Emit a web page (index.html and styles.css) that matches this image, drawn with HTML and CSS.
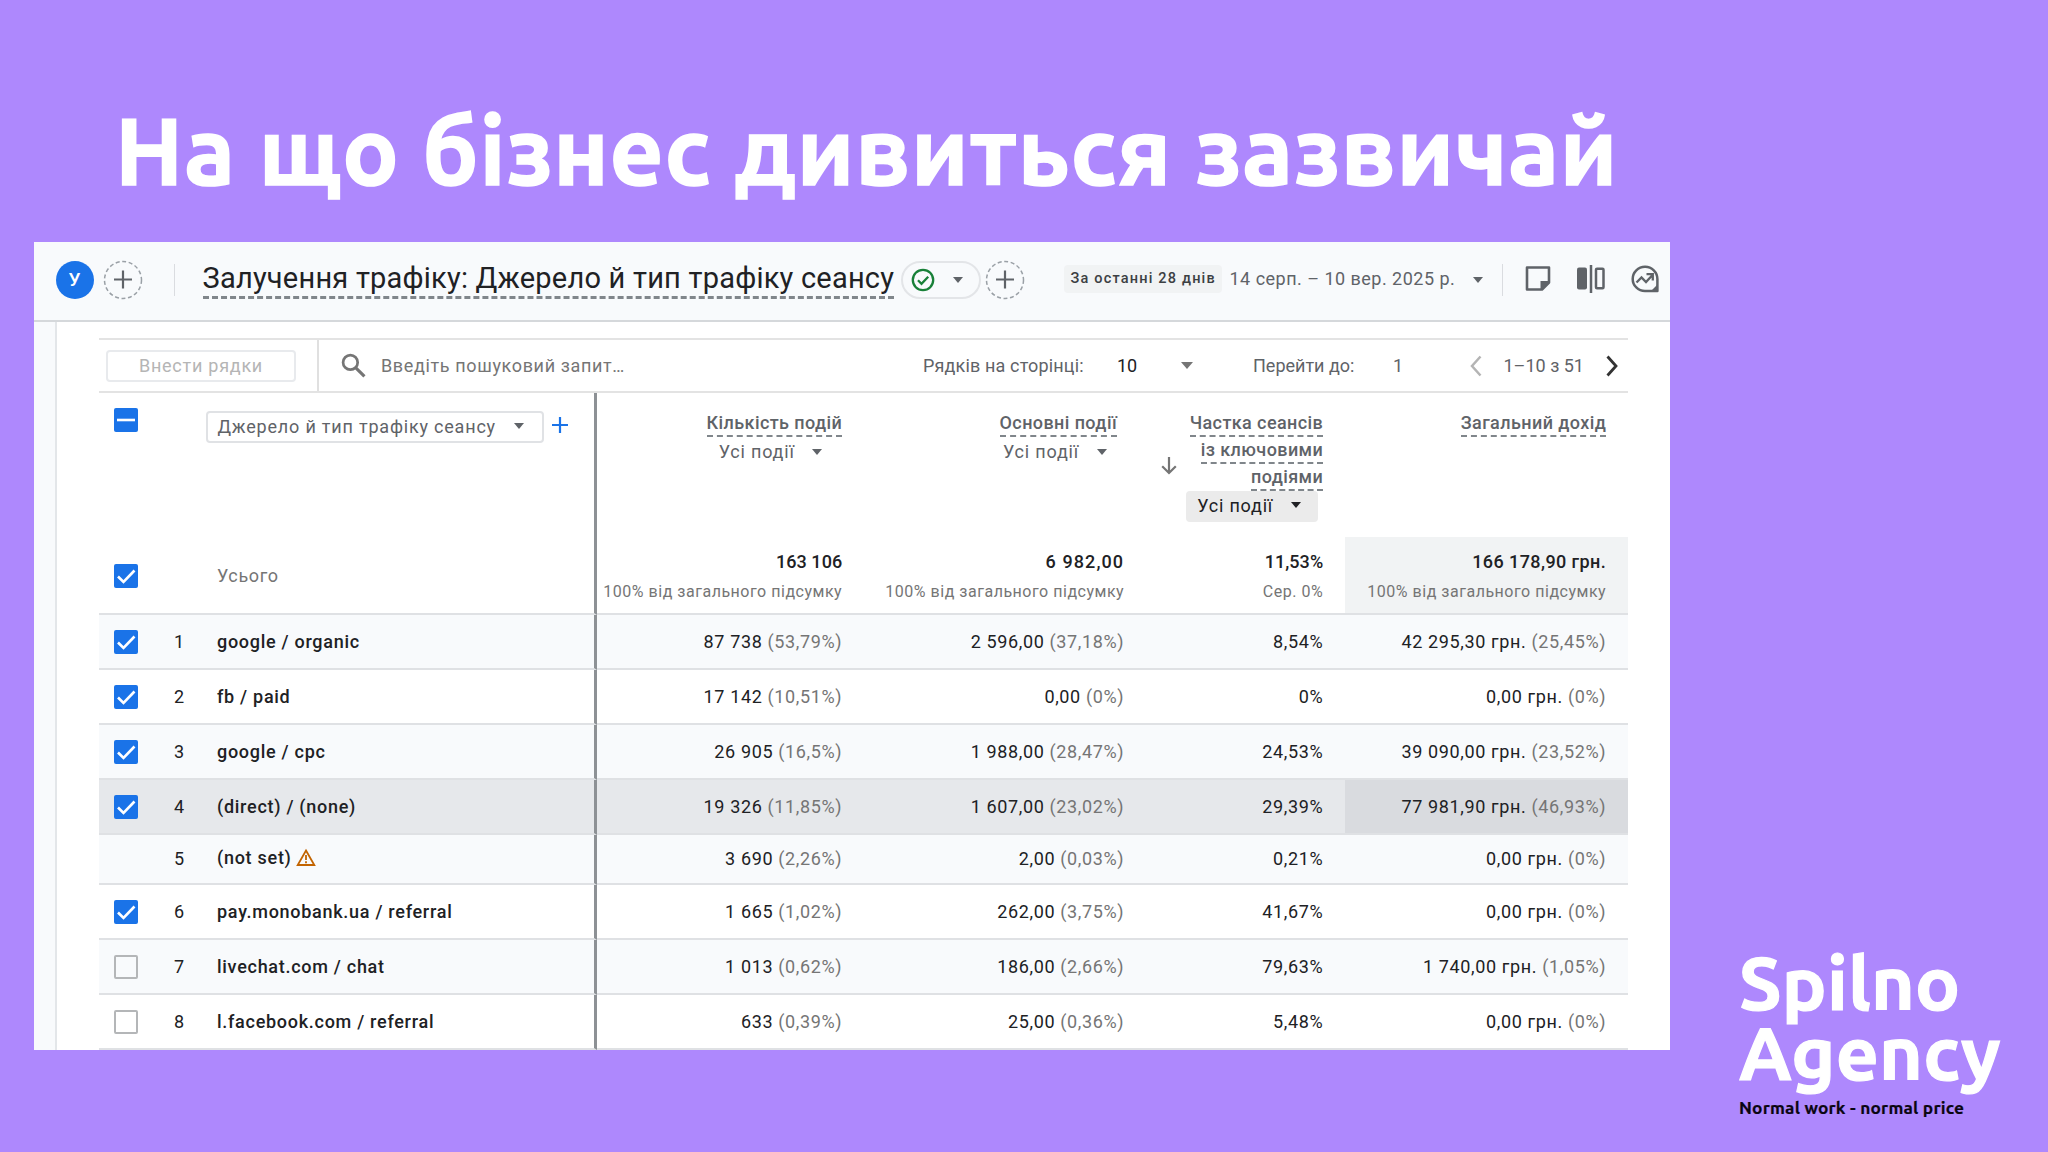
FILE: index.html
```html
<!DOCTYPE html>
<html lang="uk">
<head>
<meta charset="utf-8">
<title>На що бізнес дивиться зазвичай</title>
<link rel="stylesheet" href="styles.css">
</head>
<body>
<main class="slide">
  <h1 class="headline">На що бізнес дивиться зазвичай</h1>
  <div class="columns">
    <section class="card">
      <header class="topbar">
        <span class="avatar">У</span>
        <svg class="add add-first" viewBox="0 0 40 40"><circle cx="20" cy="20" r="18.5" fill="none" stroke="#9aa0a6" stroke-width="1.5" stroke-dasharray="4 2.6"/><path d="M20 10.5v18M11 19.5h18" stroke="#5f6368" stroke-width="2.2"/></svg>
        <i class="rule rule-a"></i>
        <h2 class="title">Залучення трафіку: Джерело й тип трафіку сеансу</h2>
        <span class="status">
          <svg viewBox="0 0 24 24"><circle cx="12" cy="12" r="10.2" fill="none" stroke="#188038" stroke-width="2.3"/><path d="M7 12.3l3.5 3.5 6.7-7" fill="none" stroke="#188038" stroke-width="2.3"/></svg>
          <i class="caret"></i>
        </span>
        <svg class="add add-second" viewBox="0 0 40 40"><circle cx="20" cy="20" r="18.5" fill="none" stroke="#9aa0a6" stroke-width="1.5" stroke-dasharray="4 2.6"/><path d="M20 10.5v18M11 19.5h18" stroke="#5f6368" stroke-width="2.2"/></svg>
        <span class="period">За останні 28 днів</span>
        <span class="dates">14 серп. – 10 вер. 2025 р.</span>
        <i class="caret"></i>
        <i class="rule rule-b"></i>
        <svg class="tool note" viewBox="0 0 28 28"><path d="M3 2.500h22v15l-7 7H3z" fill="none" stroke="#5f6368" stroke-width="2.6" stroke-linejoin="round"/><path d="M16.5 25.500v-9.500H26z" fill="#5f6368"/></svg>
        <svg class="tool compare" viewBox="0 0 28 28"><rect x="0" y="2.500" width="10" height="22" rx="2" fill="#5f6368"/><path d="M14 0v28" stroke="#5f6368" stroke-width="2.5"/><rect x="19" y="3.700" width="7.500" height="19.600" rx="1" fill="none" stroke="#5f6368" stroke-width="2.5"/></svg>
        <svg class="tool insight" viewBox="0 0 28 28"><path d="M14 1.800a12.200 12 0 1 0 0 24.200h12.400V14A12.200 12.200 0 0 0 14 1.800z" fill="none" stroke="#5f6368" stroke-width="2.500" stroke-linejoin="round"/><path d="M19 27l8-8v8z" fill="#5f6368"/><path d="M5.500 17.500l5-5 4.500 4.500 6.500-7M15.500 9.200h6.300v6.300" fill="none" stroke="#5f6368" stroke-width="2.300"/></svg>
      </header>
      <div class="body">
        <div class="table">
          <div class="toolbar">
            <div class="plot"><span class="plot-button">Внести рядки</span></div>
            <svg class="search" viewBox="0 0 24 24"><circle cx="9" cy="9" r="7" fill="none" stroke="#757575" stroke-width="2.6"/><path d="M14 14l8.500 8.500" stroke="#757575" stroke-width="3"/></svg>
            <span class="query">Введіть пошуковий запит…</span>
            <span class="rows-label">Рядків на сторінці:</span>
            <span class="rows-value">10</span>
            <i class="caret caret-big"></i>
            <span class="goto">Перейти до:</span>
            <span class="goto-value">1</span>
            <svg class="chev prev" viewBox="0 0 12 22"><path d="M10.500 1.500L2 11l8.500 9.500" fill="none" stroke="#b4b4b4" stroke-width="2.500"/></svg>
            <span class="range">1–10 з 51</span>
            <svg class="chev next" viewBox="0 0 12 22"><path d="M1.500 1.500L10 11l-8.500 9.500" fill="none" stroke="#333" stroke-width="2.800"/></svg>
          </div>
          <div class="row head">
            <div class="name">
              <svg class="check" viewBox="0 0 24 24"><rect width="24" height="24" rx="2" fill="#1a73e8"/><path d="M3 12h18" stroke="#fff" stroke-width="2.600"/></svg>
              <span class="dimension">Джерело й тип трафіку сеансу<i class="caret"></i></span>
              <svg class="plus" viewBox="0 0 16 16"><path d="M8 0v16M0 8h16" stroke="#1a73e8" stroke-width="2.200"/></svg>
            </div>
            <div class="cell"><span class="metric">Кількість подій</span><span class="events">Усі події<i class="caret"></i></span></div>
            <div class="cell shifted"><span class="metric">Основні події</span><span class="events">Усі події<i class="caret"></i></span></div>
            <div class="cell sorted">
              <svg class="sort" viewBox="0 0 16 18"><path d="M8 0v16M1.200 9.200L8 16l6.800-6.800" fill="none" stroke="#757575" stroke-width="2.200"/></svg>
              <div class="stack"><span class="metric">Частка сеансів</span><span class="metric">із ключовими</span><span class="metric">подіями</span><span class="events chip">Усі події<i class="caret"></i></span></div>
            </div>
            <div class="cell"><span class="metric">Загальний дохід</span></div>
          </div>
          <div class="row total">
            <div class="name"><svg class="check" viewBox="0 0 24 24"><rect width="24" height="24" rx="2" fill="#1a73e8"/><path d="M4 12.500l5.500 5.500L20.500 6.500" fill="none" stroke="#fff" stroke-width="2.600"/></svg><span class="index"></span><span class="all">Усього</span></div>
            <div class="cell"><b class="tight">163 106</b><small>100% від загального підсумку</small></div>
            <div class="cell"><b class="wide">6 982,00</b><small>100% від загального підсумку</small></div>
            <div class="cell"><b class="tight">11,53%</b><small>Сер. 0%</small></div>
            <div class="cell"><b>166 178,90 грн.</b><small>100% від загального підсумку</small></div>
          </div>
          <div class="row"><div class="name"><svg class="check" viewBox="0 0 24 24"><rect width="24" height="24" rx="2" fill="#1a73e8"/><path d="M4 12.500l5.500 5.500L20.500 6.500" fill="none" stroke="#fff" stroke-width="2.600"/></svg><span class="index">1</span><span class="source">google / organic</span></div><div class="cell"><p>87 738 <em>(53,79%)</em></p></div><div class="cell"><p>2 596,00 <em>(37,18%)</em></p></div><div class="cell"><p>8,54%</p></div><div class="cell"><p>42 295,30 грн. <em>(25,45%)</em></p></div></div>
          <div class="row"><div class="name"><svg class="check" viewBox="0 0 24 24"><rect width="24" height="24" rx="2" fill="#1a73e8"/><path d="M4 12.500l5.500 5.500L20.500 6.500" fill="none" stroke="#fff" stroke-width="2.600"/></svg><span class="index">2</span><span class="source">fb / paid</span></div><div class="cell"><p>17 142 <em>(10,51%)</em></p></div><div class="cell"><p>0,00 <em>(0%)</em></p></div><div class="cell"><p>0%</p></div><div class="cell"><p>0,00 грн. <em>(0%)</em></p></div></div>
          <div class="row"><div class="name"><svg class="check" viewBox="0 0 24 24"><rect width="24" height="24" rx="2" fill="#1a73e8"/><path d="M4 12.500l5.500 5.500L20.500 6.500" fill="none" stroke="#fff" stroke-width="2.600"/></svg><span class="index">3</span><span class="source">google / cpc</span></div><div class="cell"><p>26 905 <em>(16,5%)</em></p></div><div class="cell"><p>1 988,00 <em>(28,47%)</em></p></div><div class="cell"><p>24,53%</p></div><div class="cell"><p>39 090,00 грн. <em>(23,52%)</em></p></div></div>
          <div class="row hovered"><div class="name"><svg class="check" viewBox="0 0 24 24"><rect width="24" height="24" rx="2" fill="#1a73e8"/><path d="M4 12.500l5.500 5.500L20.500 6.500" fill="none" stroke="#fff" stroke-width="2.600"/></svg><span class="index">4</span><span class="source">(direct) / (none)</span></div><div class="cell"><p>19 326 <em>(11,85%)</em></p></div><div class="cell"><p>1 607,00 <em>(23,02%)</em></p></div><div class="cell"><p>29,39%</p></div><div class="cell"><p>77 981,90 грн. <em>(46,93%)</em></p></div></div>
          <div class="row short"><div class="name"><span class="check"></span><span class="index">5</span><span class="source">(not set)</span><svg class="warn" viewBox="0 0 20 18"><path d="M10 2L18.300 16.500H1.700z" fill="none" stroke="#c26401" stroke-width="1.800"/><path d="M10 6.500v5M10 12.800v2" stroke="#c26401" stroke-width="1.800"/></svg></div><div class="cell"><p>3 690 <em>(2,26%)</em></p></div><div class="cell"><p>2,00 <em>(0,03%)</em></p></div><div class="cell"><p>0,21%</p></div><div class="cell"><p>0,00 грн. <em>(0%)</em></p></div></div>
          <div class="row"><div class="name"><svg class="check" viewBox="0 0 24 24"><rect width="24" height="24" rx="2" fill="#1a73e8"/><path d="M4 12.500l5.500 5.500L20.500 6.500" fill="none" stroke="#fff" stroke-width="2.600"/></svg><span class="index">6</span><span class="source">pay.monobank.ua / referral</span></div><div class="cell"><p>1 665 <em>(1,02%)</em></p></div><div class="cell"><p>262,00 <em>(3,75%)</em></p></div><div class="cell"><p>41,67%</p></div><div class="cell"><p>0,00 грн. <em>(0%)</em></p></div></div>
          <div class="row"><div class="name"><span class="check empty"></span><span class="index">7</span><span class="source">livechat.com / chat</span></div><div class="cell"><p>1 013 <em>(0,62%)</em></p></div><div class="cell"><p>186,00 <em>(2,66%)</em></p></div><div class="cell"><p>79,63%</p></div><div class="cell"><p>1 740,00 грн. <em>(1,05%)</em></p></div></div>
          <div class="row"><div class="name"><span class="check empty"></span><span class="index">8</span><span class="source">l.facebook.com / referral</span></div><div class="cell"><p>633 <em>(0,39%)</em></p></div><div class="cell"><p>25,00 <em>(0,36%)</em></p></div><div class="cell"><p>5,48%</p></div><div class="cell"><p>0,00 грн. <em>(0%)</em></p></div></div>
        </div>
      </div>
    </section>
    <aside class="brand">
      <div class="brand-name">Spilno<br>Agency</div>
      <div class="tagline">Normal work - normal price</div>
    </aside>
  </div>
</main>
</body>
</html>
```
FILE: styles.css
```css
* { box-sizing: border-box; }
body { margin: 0; background: #ae88fd; font-family: Roboto, "Liberation Sans", sans-serif; color: #202124; }
h1, h2, p { margin: 0; font-weight: inherit; font-size: inherit; }
svg { display: block; flex: none; }
i { flex: none; }

.slide { width: 2048px; height: 1152px; overflow: hidden; }
.headline { height: 242px; padding: 88px 0 0 115px; font: 700 94px/125px Ubuntu, "Noto Sans", sans-serif; letter-spacing: 0.77px; color: #fff; -webkit-text-stroke: 1.6px #fff; white-space: nowrap; }
.columns { display: flex; height: 910px; padding-left: 34px; }

.card { display: flex; flex-direction: column; flex: none; width: 1636px; height: 808px; background: #f8fafc; white-space: nowrap; overflow: hidden; }
.caret { width: 0; height: 0; border: 5px solid transparent; border-top: 6px solid #5f6368; border-bottom: 0; }
.caret-big { border-width: 7px 6.5px 0; border-top-color: #757575; }

.topbar { display: flex; align-items: center; flex: none; height: 80px; padding: 0 11px 3px 21.5px; background: #f8fafc; border-bottom: 2px solid #d5d8db; }
.avatar { width: 38px; height: 38px; border-radius: 50%; background: #1a73e8; color: #fff; font: 500 19px/37px Roboto, sans-serif; text-align: center; }
.add { width: 40px; height: 40px; }
.add-first { margin-left: 9px; }
.add-second { margin-left: 4px; }
.rule { width: 1px; height: 32px; background: #dadce0; }
.rule-a { margin: 0 28px 0 31px; }
.rule-b { margin: 0 21px 0 19px; }
.title { width: 691px; height: 38px; font-size: 29px; line-height: 34px; letter-spacing: 0.22px; border-bottom: 3px dashed #80868b; margin-top: 1px; }
.status { display: flex; align-items: center; width: 80px; height: 38px; margin-left: 7px; padding-left: 8px; border: 2px solid #e3e5e8; border-radius: 19px; }
.status svg { width: 24px; height: 24px; margin-right: 18px; }
.period { width: 158px; height: 28px; margin: -1px 0 0 39px; padding-left: 7px; background: #f1f3f4; border-radius: 4px; font-weight: 500; font-size: 14.5px; line-height: 28px; letter-spacing: 1.19px; color: #3c4043; }
.dates { width: 251px; padding: 0 0 3px 8px; font-size: 18px; letter-spacing: 0.48px; color: #5f6368; }
.tool { width: 28px; height: 28px; margin-top: -2px; }
.compare, .insight { margin-left: 25.5px; }

.body { flex: 1; width: 1615px; margin-left: 21px; padding: 16px 0 0 42px; background: #fff; border-left: 2px solid #e3e6e9; }
.table { width: 1529px; font-size: 18px; }
.toolbar { display: flex; align-items: center; height: 55px; border-top: 2px solid #e3e3e3; border-bottom: 2px solid #e3e3e3; color: #5f6368; }
.plot { display: flex; align-items: center; width: 220px; height: 51px; padding-left: 7px; border-right: 2px solid #e0e0e0; }
.plot-button { width: 190px; height: 32px; border: 2px solid #e8eaed; border-radius: 4px; text-align: center; line-height: 27px; letter-spacing: 0.75px; color: #b5b5b5; }
.search { width: 25px; height: 25px; margin-left: 22px; }
.query { width: 542px; margin-left: 15px; letter-spacing: 0.64px; color: #757575; }
.rows-label { width: 194px; letter-spacing: 0.15px; }
.rows-value { width: 64px; color: #202124; }
.goto { width: 140px; margin-left: 60px; }
.goto-value { width: 76.5px; }
.chev { width: 12px; height: 22px; }
.range { width: 102px; margin-left: 22px; }

.row { display: grid; grid-template-columns: 498px 267px 282px 199px 283px; height: 55px; letter-spacing: 0.63px; }
.name { display: flex; align-items: center; padding-left: 14.5px; border-right: 3px solid #8d9195; border-bottom: 2px solid #dfe1e4; }
.cell { display: flex; flex-direction: column; align-items: flex-end; justify-content: center; padding-right: 21.8px; border-bottom: 2px solid #dfe1e4; }
.row:nth-child(even) { background: #f8fafc; }
.check { width: 24px; height: 24px; flex: none; }
.empty { border: 2.5px solid #b4b6b8; border-radius: 2px; }
.index { width: 43px; margin-left: 36.5px; }
.source { font-weight: 500; letter-spacing: 0.72px; }
em { font-style: normal; color: #757575; }
.warn { width: 20px; height: 19px; margin-left: 4px; }

.row.head { height: 144px; background: #fff; }
.head .name { align-items: flex-start; padding-top: 15px; border-bottom: 0; }
.head .cell { justify-content: flex-start; padding-top: 17px; border-bottom: 0; color: #5f6368; }
.head .shifted { padding-right: 29px; }
.dimension { display: flex; align-items: center; width: 338px; height: 32px; margin: 3px 8.5px 0 68px; padding: 0 0 2px 10px; border: 2px solid #e0e2e5; border-radius: 4px; letter-spacing: 0.8px; color: #5f6368; }
.dimension .caret { margin-left: 18px; }
.plus { width: 16px; height: 16px; margin-top: 9px; }
.metric { height: 27px; font-weight: 500; line-height: 25px; letter-spacing: 0.41px; border-bottom: 2px dashed #80868b; }
.events { display: flex; align-items: center; height: 29px; padding-right: 20px; letter-spacing: 0.8px; }
.events .caret { margin-left: 17.5px; }
.shifted .events { padding-right: 10.5px; }
.head .sorted { flex-direction: row; align-items: flex-start; justify-content: flex-end; gap: 9px; }
.sort { width: 16px; height: 18px; margin-top: 47px; }
.stack { display: flex; flex-direction: column; align-items: flex-end; }
.chip { width: 132px; height: 31px; margin: 0 5px 0 0; padding: 0 0 3px 11px; background: #ebebeb; border-radius: 4px; color: #202124; }
.chip .caret { border-top-color: #202124; }
.row.total { height: 78px; background: #fff; }
.total .name { padding-top: 1px; }
.total .cell { padding-top: 4px; }
.total .cell:last-child { background: #f1f3f4; }
.all { padding-bottom: 1px; color: #757575; }
.total b { font-weight: 500; line-height: 30px; letter-spacing: 0.42px; }
.total b.tight { letter-spacing: 0.05px; }
.total b.wide { letter-spacing: 1.1px; }
.total small { font-size: 16px; line-height: 30px; letter-spacing: 0.52px; color: #757575; }
.row.hovered { background: #e6e8eb; }
.hovered .cell:last-child { background: #d9dbdf; }
.row.short { height: 50px; }
.short .index, .short p { margin-bottom: 1px; }
.short .source, .short .warn { margin-bottom: 3px; }

.brand { padding: 705px 0 0 69px; color: #fff; font: 700 75px/70px Ubuntu, "Noto Sans", sans-serif; letter-spacing: 0.2px; -webkit-text-stroke: 1.2px #fff; white-space: nowrap; }
.tagline { margin-top: 9px; font-size: 17.3px; line-height: 24px; color: #0b0612; -webkit-text-stroke: 0.2px #0b0612; }
```
